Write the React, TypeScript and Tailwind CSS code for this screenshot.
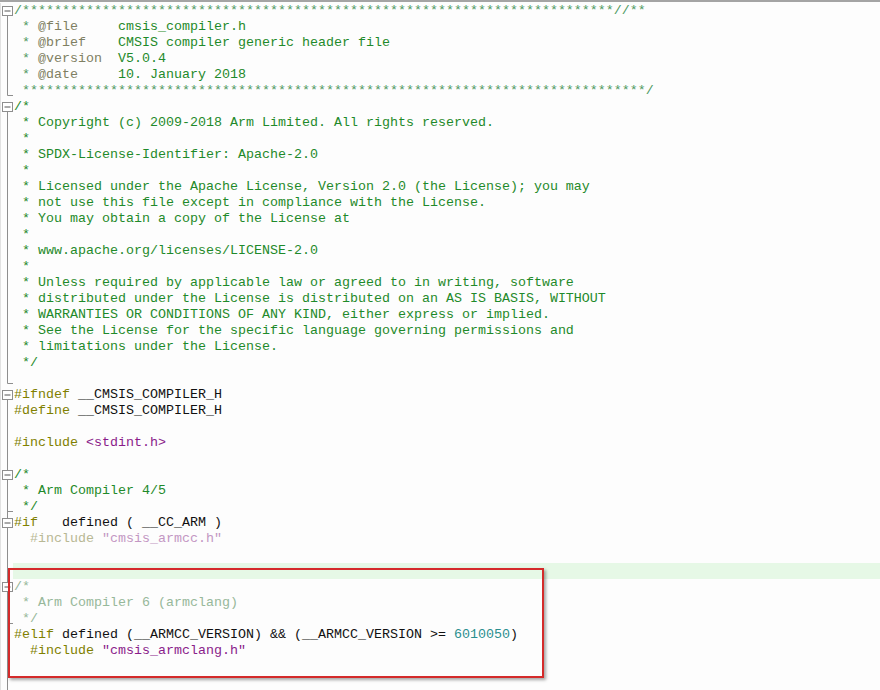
import React from 'react';

type Tok = [string, string];
type Fold = 'box' | 'boxIn' | 'line' | 'end' | 'tick' | 'none';

const cm = 'text-[#1f8a2a]';
const star = 'text-[#4f9a5f]';
const doc = 'text-[#7f7f62]';
const pre = 'text-[#808000]';
const id = 'text-[#111111]';
const str = 'text-[#8a1c8a]';
const num = 'text-[#2a8f8f]';
const preOff = 'text-[#b8b894]';
const strOff = 'text-[#c397c3]';
const cmOff = 'text-[#97b89a]';

const lines: { toks: Tok[]; fold: Fold }[] = [
    { toks: [['/' + '*'.repeat(74) + '//**', star]], fold: 'box' },
    { toks: [[' * ', star], ['@file', doc], ['     cmsis_compiler.h', cm]], fold: 'line' },
    { toks: [[' * ', star], ['@brief', doc], ['    CMSIS compiler generic header file', cm]], fold: 'line' },
    { toks: [[' * ', star], ['@version', doc], ['  V5.0.4', cm]], fold: 'line' },
    { toks: [[' * ', star], ['@date', doc], ['     10. January 2018', cm]], fold: 'line' },
    { toks: [[' ' + '*'.repeat(78) + '/', star]], fold: 'end' },
    { toks: [['/*', cm]], fold: 'box' },
    { toks: [[' * Copyright (c) 2009-2018 Arm Limited. All rights reserved.', cm]], fold: 'line' },
    { toks: [[' *', cm]], fold: 'line' },
    { toks: [[' * SPDX-License-Identifier: Apache-2.0', cm]], fold: 'line' },
    { toks: [[' *', cm]], fold: 'line' },
    { toks: [[' * Licensed under the Apache License, Version 2.0 (the License); you may', cm]], fold: 'line' },
    { toks: [[' * not use this file except in compliance with the License.', cm]], fold: 'line' },
    { toks: [[' * You may obtain a copy of the License at', cm]], fold: 'line' },
    { toks: [[' *', cm]], fold: 'line' },
    { toks: [[' * www.apache.org/licenses/LICENSE-2.0', cm]], fold: 'line' },
    { toks: [[' *', cm]], fold: 'line' },
    { toks: [[' * Unless required by applicable law or agreed to in writing, software', cm]], fold: 'line' },
    { toks: [[' * distributed under the License is distributed on an AS IS BASIS, WITHOUT', cm]], fold: 'line' },
    { toks: [[' * WARRANTIES OR CONDITIONS OF ANY KIND, either express or implied.', cm]], fold: 'line' },
    { toks: [[' * See the License for the specific language governing permissions and', cm]], fold: 'line' },
    { toks: [[' * limitations under the License.', cm]], fold: 'line' },
    { toks: [[' */', cm]], fold: 'line' },
    { toks: [], fold: 'end' },
    { toks: [['#ifndef', pre], [' __CMSIS_COMPILER_H', id]], fold: 'box' },
    { toks: [['#define', pre], [' __CMSIS_COMPILER_H', id]], fold: 'line' },
    { toks: [], fold: 'line' },
    { toks: [['#include', pre], [' ', id], ['<stdint.h>', str]], fold: 'line' },
    { toks: [], fold: 'line' },
    { toks: [['/*', cm]], fold: 'boxIn' },
    { toks: [[' * Arm Compiler 4/5', cm]], fold: 'line' },
    { toks: [[' */', cm]], fold: 'tick' },
    { toks: [['#if', pre], ['   defined ( __CC_ARM )', id]], fold: 'boxIn' },
    { toks: [['  #include ', preOff], ['"cmsis_armcc.h"', strOff]], fold: 'line' },
    { toks: [], fold: 'line' },
    { toks: [], fold: 'line' },
    { toks: [['/*', cmOff]], fold: 'boxIn' },
    { toks: [[' * Arm Compiler 6 (armclang)', cmOff]], fold: 'line' },
    { toks: [[' */', cmOff]], fold: 'tick' },
    {
        toks: [
            ['#elif', pre],
            [' defined (__ARMCC_VERSION) && (__ARMCC_VERSION >= ', id],
            ['6010050', num],
            [')', id],
        ],
        fold: 'line',
    },
    { toks: [['  #include ', pre], ['"cmsis_armclang.h"', str]], fold: 'line' },
    { toks: [], fold: 'line' },
    { toks: [], fold: 'line' },
];

// fold margin marker, Notepad++ box-tree style
const FoldMark: React.FC<{ kind: Fold }> = ({ kind }) => {
    const c = '#8e8e8e';
    return (
        <svg width="13" height="16" viewBox="0 0 13 16" className="block shrink-0">
            {kind === 'line' && <line x1="6.5" y1="0" x2="6.5" y2="16" stroke={c} />}
            {kind === 'end' && <path d="M6.5 0V12.5H12" stroke={c} fill="none" />}
            {kind === 'tick' && <path d="M6.5 0V16M6.5 12.5H12" stroke={c} fill="none" />}
            {(kind === 'box' || kind === 'boxIn') && (
                <>
                    {kind === 'boxIn' && <line x1="6.5" y1="0" x2="6.5" y2="3" stroke={c} />}
                    <line x1="6.5" y1="12" x2="6.5" y2="16" stroke={c} />
                    <rect x="1.5" y="3.5" width="10" height="9" fill="#ffffff" stroke={c} />
                    <line x1="3.5" y1="8" x2="9.5" y2="8" stroke="#555555" />
                </>
            )}
        </svg>
    );
};

export default function App() {
    return (
        <div className="relative w-[880px] h-[690px] overflow-hidden bg-[#fdfdfd] border-t-2 border-[#a4a4a4]">
            <div
                className="flex flex-col pt-[1px] text-[13.33px]"
                style={{ fontFamily: '"Liberation Mono", "Courier New", monospace' }}
            >
                {lines.map((ln, i) => (
                    <div key={i} className="flex h-4 leading-4">
                        <div className="w-[13px] shrink-0 border-l border-[#e2e2e2]">
                            <FoldMark kind={ln.fold} />
                        </div>
                        <div
                            className={
                                i === 35
                                    ? 'flex-1 pl-[1px] whitespace-pre bg-[#e6f8e6]'
                                    : 'flex-1 pl-[1px] whitespace-pre'
                            }
                        >
                            {ln.toks.map(([t, cls], j) => (
                                <span key={j} className={cls}>
                                    {t}
                                </span>
                            ))}
                        </div>
                    </div>
                ))}
            </div>

            {/* highlight frame drawn over the Arm Compiler 6 block */}
            <div className="absolute left-[8px] top-[566px] w-[536px] h-[110px] border-2 border-[#d42a2a] shadow-[2px_2px_3px_rgba(0,0,0,0.35)]" />
        </div>
    );
}
